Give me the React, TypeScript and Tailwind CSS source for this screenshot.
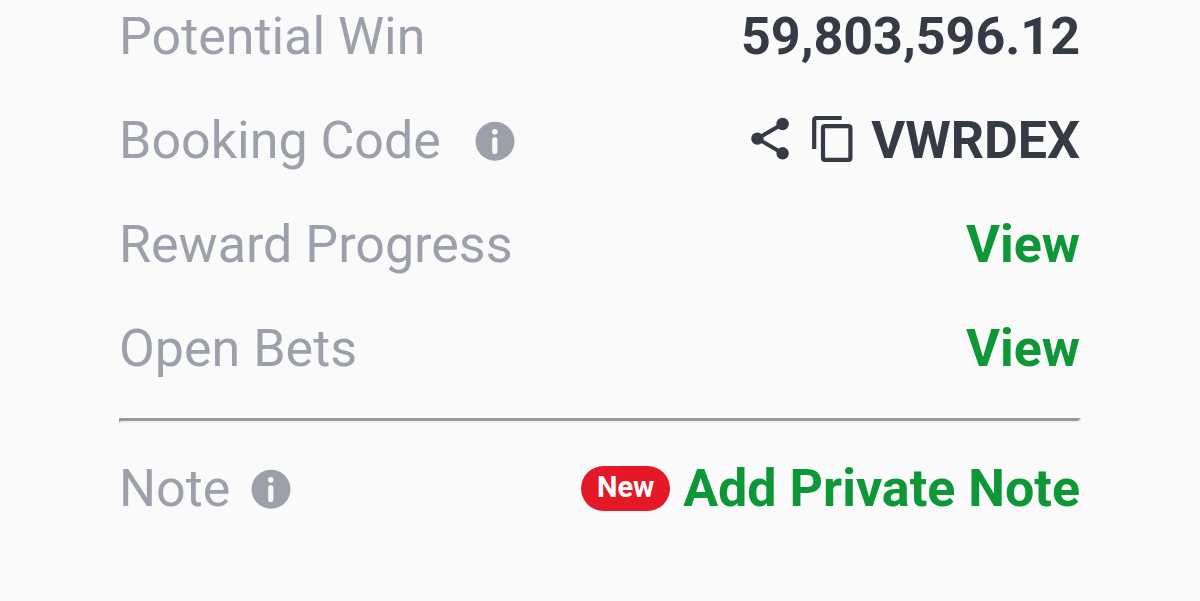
import type { ReactNode } from "react";

function InfoIcon() {
  return (
    <svg width="40" height="40" viewBox="0 0 40 40" className="shrink-0">
      <circle cx="20" cy="20.3" r="19.5" fill="#9ca0ab" />
      <circle cx="19.8" cy="10.8" r="2.8" fill="#fafafa" />
      <rect x="17.2" y="16.2" width="5.2" height="17" rx="2.4" fill="#fafafa" />
    </svg>
  );
}

function ShareIcon() {
  return (
    <svg width="40" height="48" viewBox="0 0 40 48" fill="#353a45" className="shrink-0">
      <path d="M32.6 7 7.4 21.6l25.2 14.7" fill="none" stroke="#353a45" strokeWidth="4" />
      <circle cx="32.6" cy="7" r="6.2" />
      <circle cx="7.4" cy="21.6" r="6.2" />
      <circle cx="32.6" cy="36.3" r="6.2" />
    </svg>
  );
}

function CopyIcon() {
  return (
    <svg width="42" height="50" viewBox="0 0 42 50" fill="none" stroke="#353a45" strokeWidth="4.2" className="shrink-0">
      <path d="M2.2 33V4a2 2 0 0 1 2-2h25.5" />
      <rect x="11" y="10.2" width="27.4" height="33.7" rx="2" />
    </svg>
  );
}

type RowProps = {
  label: string;
  icon?: ReactNode;
  children: ReactNode;
};

function Row({ label, icon, children }: RowProps) {
  return (
    <div className="flex h-[104px] items-center justify-between">
      <div className="-ml-px flex items-center text-[#9ca0ab]">
        <span>{label}</span>
        {icon}
      </div>
      <div className="flex items-center font-bold text-[#353a45]">{children}</div>
    </div>
  );
}

export default function App() {
  return (
    <div className="h-[601px] overflow-hidden bg-[#fafafa] px-[120px] font-['Roboto',sans-serif] text-[52px] leading-[60px] whitespace-nowrap">
      <div className="-mt-[15px]">
        <Row label="Potential Win">59,803,596.12</Row>
        <Row label="Booking Code" icon={<div className="ml-[34px]"><InfoIcon /></div>}>
          <ShareIcon />
          <div className="mr-[17px] ml-[22px]"><CopyIcon /></div>
          <span>VWRDEX</span>
        </Row>
        <Row label="Reward Progress">
          <span className="text-[#0d9737]">View</span>
        </Row>
        <Row label="Open Bets">
          <span className="text-[#0d9737]">View</span>
        </Row>
      </div>
      <div className="-mr-px -ml-px mt-[17px] h-[5px] border-t-[3px] border-r-[3px] border-b-2 border-l-2 border-t-[#9a9a9a] border-r-[#f0f0f0] border-b-[#f0f0f0] border-l-[#9a9a9a]" />
      <div className="mt-[14px]">
        <Row label="Note" icon={<div className="ml-[21px]"><InfoIcon /></div>}>
          <span className="-mt-[2px] mr-[13px] flex h-[45px] w-[89px] items-center justify-center rounded-full bg-[#e41827] pb-px text-[29px] leading-none text-white">New</span>
          <span className="text-[#0d9737]">Add Private Note</span>
        </Row>
      </div>
    </div>
  );
}
